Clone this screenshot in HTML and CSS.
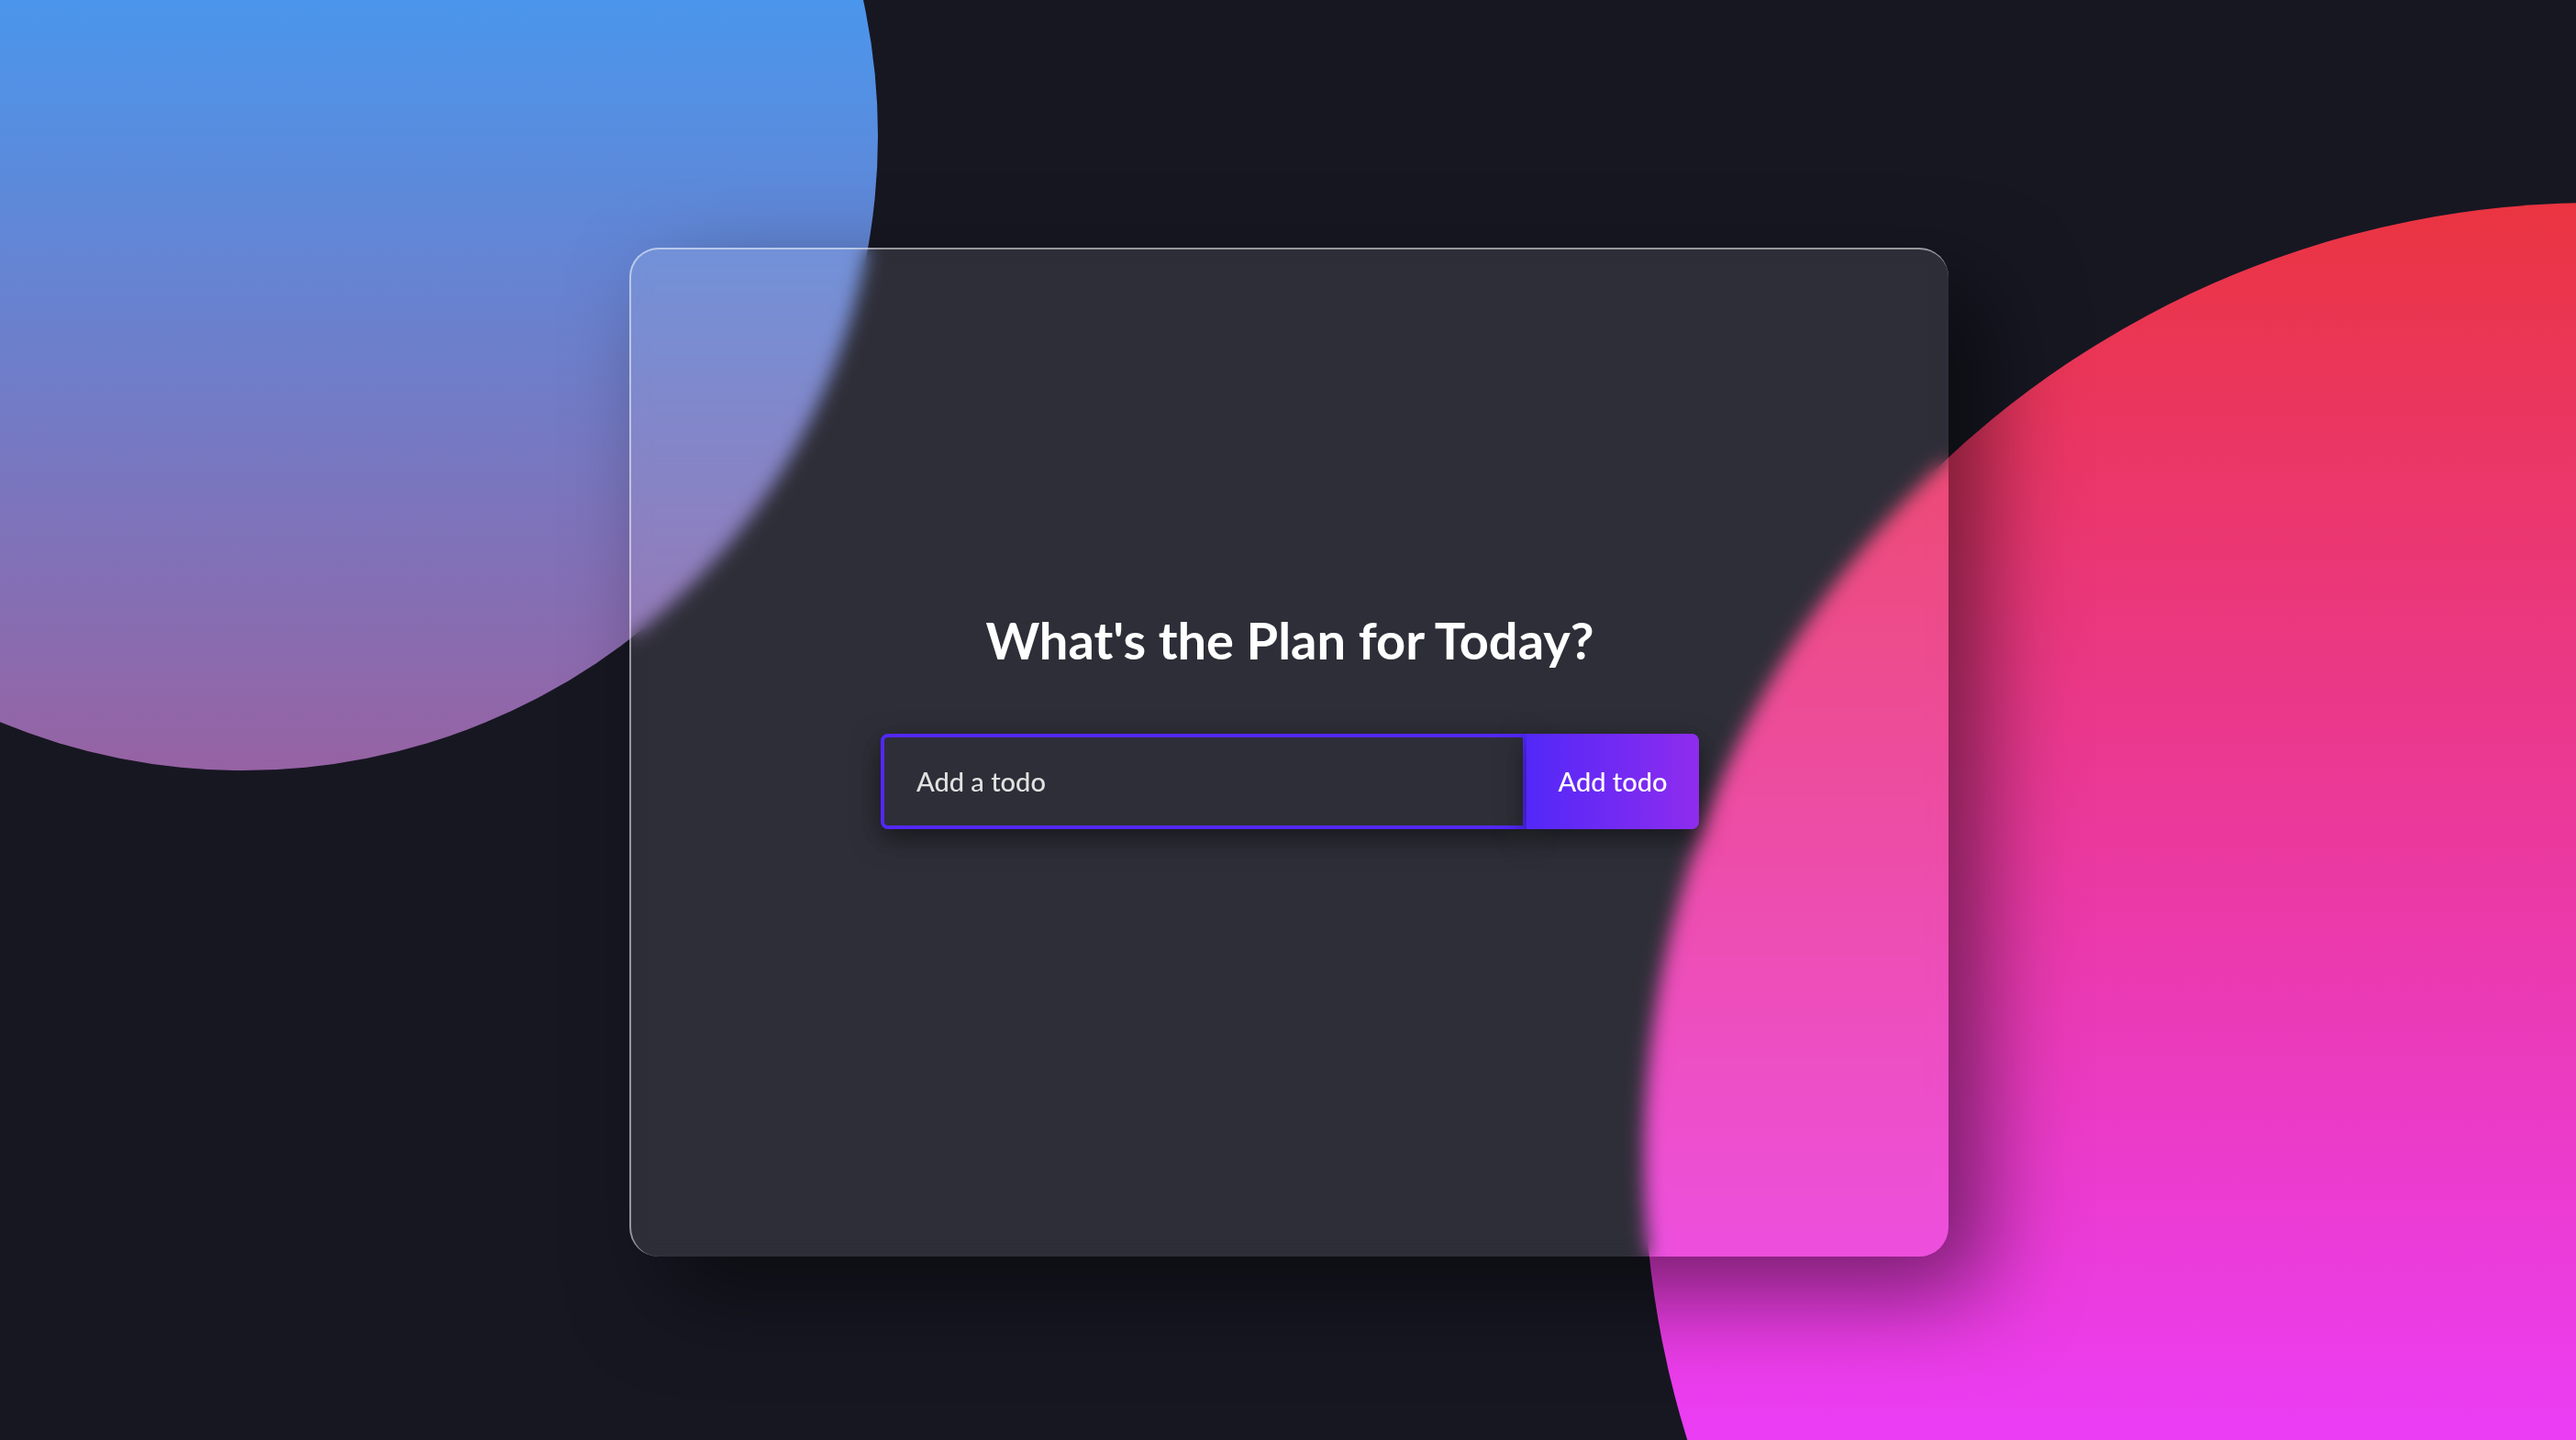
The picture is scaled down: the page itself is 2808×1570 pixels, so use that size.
FILE: index.html
```html
<!DOCTYPE html>
<html lang="en">
<head>
<meta charset="utf-8">
<meta name="viewport" content="width=device-width, initial-scale=1">
<title>Todo</title>
<link rel="stylesheet" href="styles.css">
</head>
<body>
<main class="todo-app">
  <h1 class="title">What's the Plan for Today?</h1>
  <form class="todo-form">
    <input class="todo-input" type="text" name="todo" placeholder="Add a todo" aria-label="Add a todo">
    <button class="todo-button" type="submit">Add todo</button>
  </form>
</main>
</body>
</html>
```
FILE: styles.css
```css
* {
  box-sizing: border-box;
}

body {
  position: relative;
  min-height: 100vh;
  margin: 0;
  padding: 270px 32px 32px 34px;
  overflow: hidden;
  background: #171722;
  font-family: "Trebuchet MS", "Lato", sans-serif;
}

/* Two gradient discs behind the glass panel */
body::before,
body::after {
  content: "";
  position: absolute;
  z-index: -1;
  inset: 0;
}

body::before {
  background: linear-gradient(#ea3323, #eb3df5);
  clip-path: circle(1039px at calc(100% + 23px) 1260px);
}

body::after {
  background: linear-gradient(#4a96ec, #d93664);
  clip-path: circle(692px at 265px 148px);
}

.todo-app {
  display: flex;
  flex-direction: column;
  align-items: center;
  justify-content: center;
  width: 100%;
  max-width: 1438px;
  min-height: 1100px;
  margin: 0 auto;
  border-top: 2px solid rgba(255, 255, 255, 0.5);
  border-left: 2px solid rgba(255, 255, 255, 0.5);
  border-radius: 32px;
  background: rgba(255, 255, 255, 0.1);
  box-shadow: 40px 40px 100px rgba(0, 0, 0, 0.5);
  backdrop-filter: blur(10px);
}

.title {
  margin: 0 0 70px;
  color: #fff;
  font-size: 56px;
  font-weight: 700;
  line-height: 64px;
  text-align: center;
}

.todo-form {
  display: flex;
  width: 100%;
  max-width: 892px;
  margin-bottom: 72px;
}

.todo-input,
.todo-button {
  height: 104px;
  padding: 0 0 2px;
  font-family: inherit;
  font-size: 29px;
  font-weight: 500;
  box-shadow: 0 10px 30px rgba(0, 0, 0, 0.5);
}

.todo-input {
  flex: 1;
  min-width: 0;
  padding-inline: 35px;
  border: 4px solid #5228f8;
  border-radius: 8px 0 0 8px;
  outline: none;
  background: transparent;
  color: #fff;
}

.todo-input::placeholder {
  color: #e2e2e2;
  opacity: 1;
}

.todo-button {
  width: 188px;
  border: 0;
  border-radius: 0 8px 8px 0;
  background: linear-gradient(90deg, #5228f8, #8f2cee);
  color: #fff;
  cursor: pointer;
}
```
